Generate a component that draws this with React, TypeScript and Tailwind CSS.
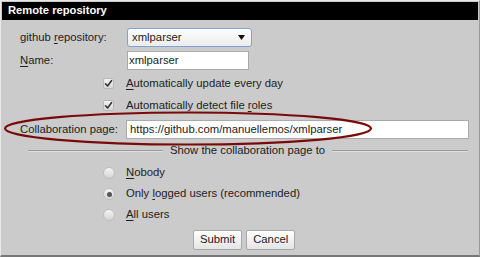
import React from "react";

const U = ({ children }: { children: React.ReactNode }) => <span className="underline underline-offset-2">{children}</span>;

const Check = () => (
  <div className="w-[11px] h-[11px] rounded-[2px] border border-[#b8b8b8] bg-gradient-to-b from-[#f4f4f4] to-[#d8d8d8] flex items-center justify-center">
    <svg width="9" height="9" viewBox="0 0 9 9">
      <path d="M1.5 4.8 L3.6 7 L7.6 1.6" fill="none" stroke="#333" strokeWidth="1.6" strokeLinecap="round" strokeLinejoin="round" />
    </svg>
  </div>
);

const Radio = ({ on }: { on?: boolean }) => (
  <div className="w-[12px] h-[12px] rounded-full border border-[#bdbdbd] bg-gradient-to-b from-[#f4f4f4] to-[#d4d4d4] flex items-center justify-center">
    {on && <div className="w-[5px] h-[5px] rounded-full bg-[#555]" />}
  </div>
);

export default function App() {
  return (
    <div className="w-[480px] h-[257px] bg-white font-['Liberation_Sans',Arial,sans-serif] text-[11.3px] text-[#222] leading-none">
      <div className="relative w-[480px] h-[257px] border-l border-t border-[#e8e8e8] border-r border-r-[#999] border-b-2 border-b-[#777] bg-[#cbcbcb] pt-[1px] px-[1px]">
        <div className="h-[18px] bg-black text-white font-bold text-[11.2px] pl-[6px] flex items-center">Remote repository</div>

        <div className="pl-[18px]">
          <div className="flex items-center mt-[8px] h-[19px]">
            <div className="w-[107px]">github <U>r</U>epository:</div>
            <div className="w-[125px] h-[19px] rounded-[3px] border border-[#7fa3d6] bg-gradient-to-b from-white to-[#ececec] flex items-center justify-between pl-[4px] pr-[6px]">
              <span>xmlparser</span>
              <svg width="7" height="5" viewBox="0 0 7 5"><path d="M0 0 L7 0 L3.5 5 Z" fill="#111" /></svg>
            </div>
          </div>
          <div className="flex items-center mt-[4px] h-[19px]">
            <div className="w-[107px]"><U>N</U>ame:</div>
            <div className="w-[122px] h-[19px] border border-[#aaa] bg-white flex items-center pl-[1px]">xmlparser</div>
          </div>
          <div className="flex items-center mt-[4px] h-[19px] pl-[83px]">
            <Check />
            <span className="ml-[12px]"><U>A</U>utomatically update every day</span>
          </div>
          <div className="flex items-center mt-[3px] h-[19px] pl-[83px]">
            <Check />
            <span className="ml-[12px]">Automatically detect file <U>r</U>oles</span>
          </div>
          <div className="flex items-center mt-[5px] h-[19px]">
            <div className="w-[106px]"><U>C</U>ollaboration page:</div>
            <div className="w-[343px] h-[19px] border border-[#aaa] bg-white flex items-center pl-[3px]">https://github.com/manuellemos/xmlparser</div>
          </div>
          <div className="flex items-center mt-[6px] h-[12px] pl-[8px] pr-[10px]">
            <div className="w-[135px] h-[2px] border-t border-[#999] border-b border-b-[#e0e0e0]" />
            <span className="mx-[7px]">Show the collaboration page to</span>
            <div className="flex-1 h-[2px] border-t border-[#999] border-b border-b-[#e0e0e0]" />
          </div>
          <div className="flex flex-col mt-[10px] pl-[83px] gap-[9px]">
            <div className="flex items-center h-[12px]"><Radio /><span className="ml-[11px]"><U>N</U>obody</span></div>
            <div className="flex items-center h-[12px]"><Radio on /><span className="ml-[11px]">Only <U>l</U>ogged users (recommended)</span></div>
            <div className="flex items-center h-[12px]"><Radio /><span className="ml-[11px]"><U>A</U>ll users</span></div>
          </div>
          <div className="flex gap-[4px] mt-[9px] pl-[173px]">
            <button className="h-[20px] px-[6px] rounded-[2px] border border-[#a8a8a8] bg-gradient-to-b from-white to-[#e4e4e4] text-[#222]">Submit</button>
            <button className="h-[20px] px-[6px] rounded-[2px] border border-[#a8a8a8] bg-gradient-to-b from-white to-[#e4e4e4] text-[#222]">Cancel</button>
          </div>
        </div>

        <svg className="absolute left-0 top-0 pointer-events-none" width="480" height="257">
          <ellipse cx="187" cy="127.5" rx="183" ry="16" fill="none" stroke="#7a0a0a" strokeWidth="2.2" />
        </svg>
      </div>
    </div>
  );
}
